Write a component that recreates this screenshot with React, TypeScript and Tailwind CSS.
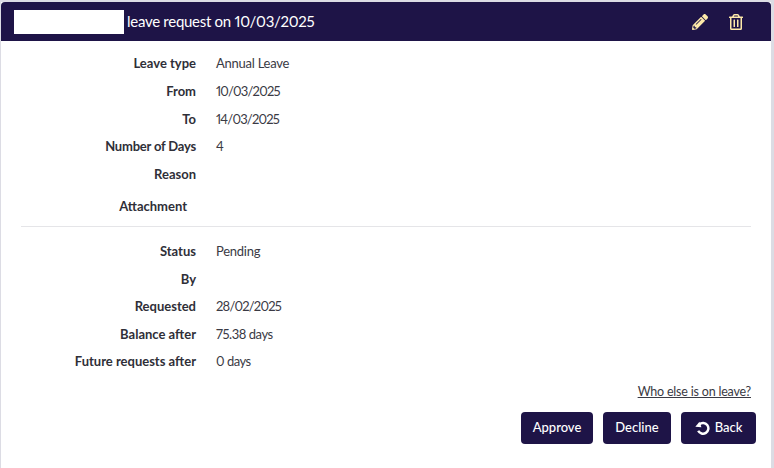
import React from "react";
import { FaPencilAlt, FaRegTrashAlt } from "react-icons/fa";

const Row = ({
  label,
  value,
  labelClass = "",
  valueClass = "tracking-[-0.25px]",
}: {
  label: string;
  value?: string;
  labelClass?: string;
  valueClass?: string;
}) => (
  <div className="flex items-center h-[27.6px]">
    <div className={`w-[195px] text-right font-bold text-[#2f2f38] ${labelClass}`}>{label}</div>
    <div className={`ml-5 text-[#3a3a44] proportional-nums ${valueClass}`}>{value}</div>
  </div>
);

const Btn = ({ children, className = "" }: { children: React.ReactNode; className?: string }) => (
  <button className={`h-8 rounded bg-[#1e1447] text-white font-medium flex items-center justify-center ${className}`}>
    {children}
  </button>
);

const BackIcon = () => (
  <svg width="15" height="15" viewBox="0 0 14 14" className="mr-[5px]">
    <path d="M4 4.2 A5 5 0 1 1 3 10" fill="none" stroke="currentColor" strokeWidth="2.3" />
    <polygon points="0.3,6.2 6,6.8 4.2,1.6" fill="currentColor" />
  </svg>
);

export default function App() {
  return (
    <div className="h-[468px] w-[774px] overflow-hidden bg-[#dcdce4] pt-0.5 pl-px pr-[3px] font-['Lato',sans-serif] text-[13px]">
      <div className="h-full bg-white">
        <div className="h-[39px] bg-[#1e1447] rounded-t-sm flex items-center pl-[13px] pr-[27px] text-white">
          <span className="h-6 w-[110px] bg-white" />
          <span className="ml-[3px] text-[15px] tracking-[-0.28px] proportional-nums">leave request on 10/03/2025</span>
          <div className="ml-auto flex items-center gap-[20px] text-[#fde9a9]">
            <FaPencilAlt size={16} />
            <FaRegTrashAlt size={16} />
          </div>
        </div>
        <div className="pt-[9.45px]">
          <Row label="Leave type" value="Annual Leave" />
          <Row label="From" value="10/03/2025" valueClass="tracking-[-0.8px]" />
          <Row label="To" value="14/03/2025" valueClass="tracking-[-0.8px]" />
          <Row label="Number of Days" value="4" labelClass="tracking-[-0.2px]" />
          <Row label="Reason" />
          <div className="flex items-center h-[36.25px]">
            <div className="w-[186px] text-right font-bold text-[#2f2f38]">Attachment</div>
          </div>
          <div className="mx-5 mt-[1px] mb-[11.4px] border-t border-[#e5e5e8]" />
          <Row label="Status" value="Pending" />
          <Row label="By" />
          <Row label="Requested" value="28/02/2025" valueClass="tracking-[-0.8px]" />
          <Row label="Balance after" value="75.38 days" valueClass="tracking-[-0.45px]" />
          <Row label="Future requests after" value="0 days" valueClass="tracking-[-0.5px]" />
        </div>
        <div className="mt-[6px] pr-[20px] text-right">
          <a className="underline text-[#3a3a44] text-[12.5px] tracking-[-0.2px]">Who else is on leave?</a>
        </div>
        <div className="mt-[10px] pr-[15px] flex justify-end gap-[10px]">
          <Btn className="w-[72px]">Approve</Btn>
          <Btn className="w-[68px]">Decline</Btn>
          <Btn className="w-[75px]">
            <BackIcon />
            Back
          </Btn>
        </div>
      </div>
    </div>
  );
}
